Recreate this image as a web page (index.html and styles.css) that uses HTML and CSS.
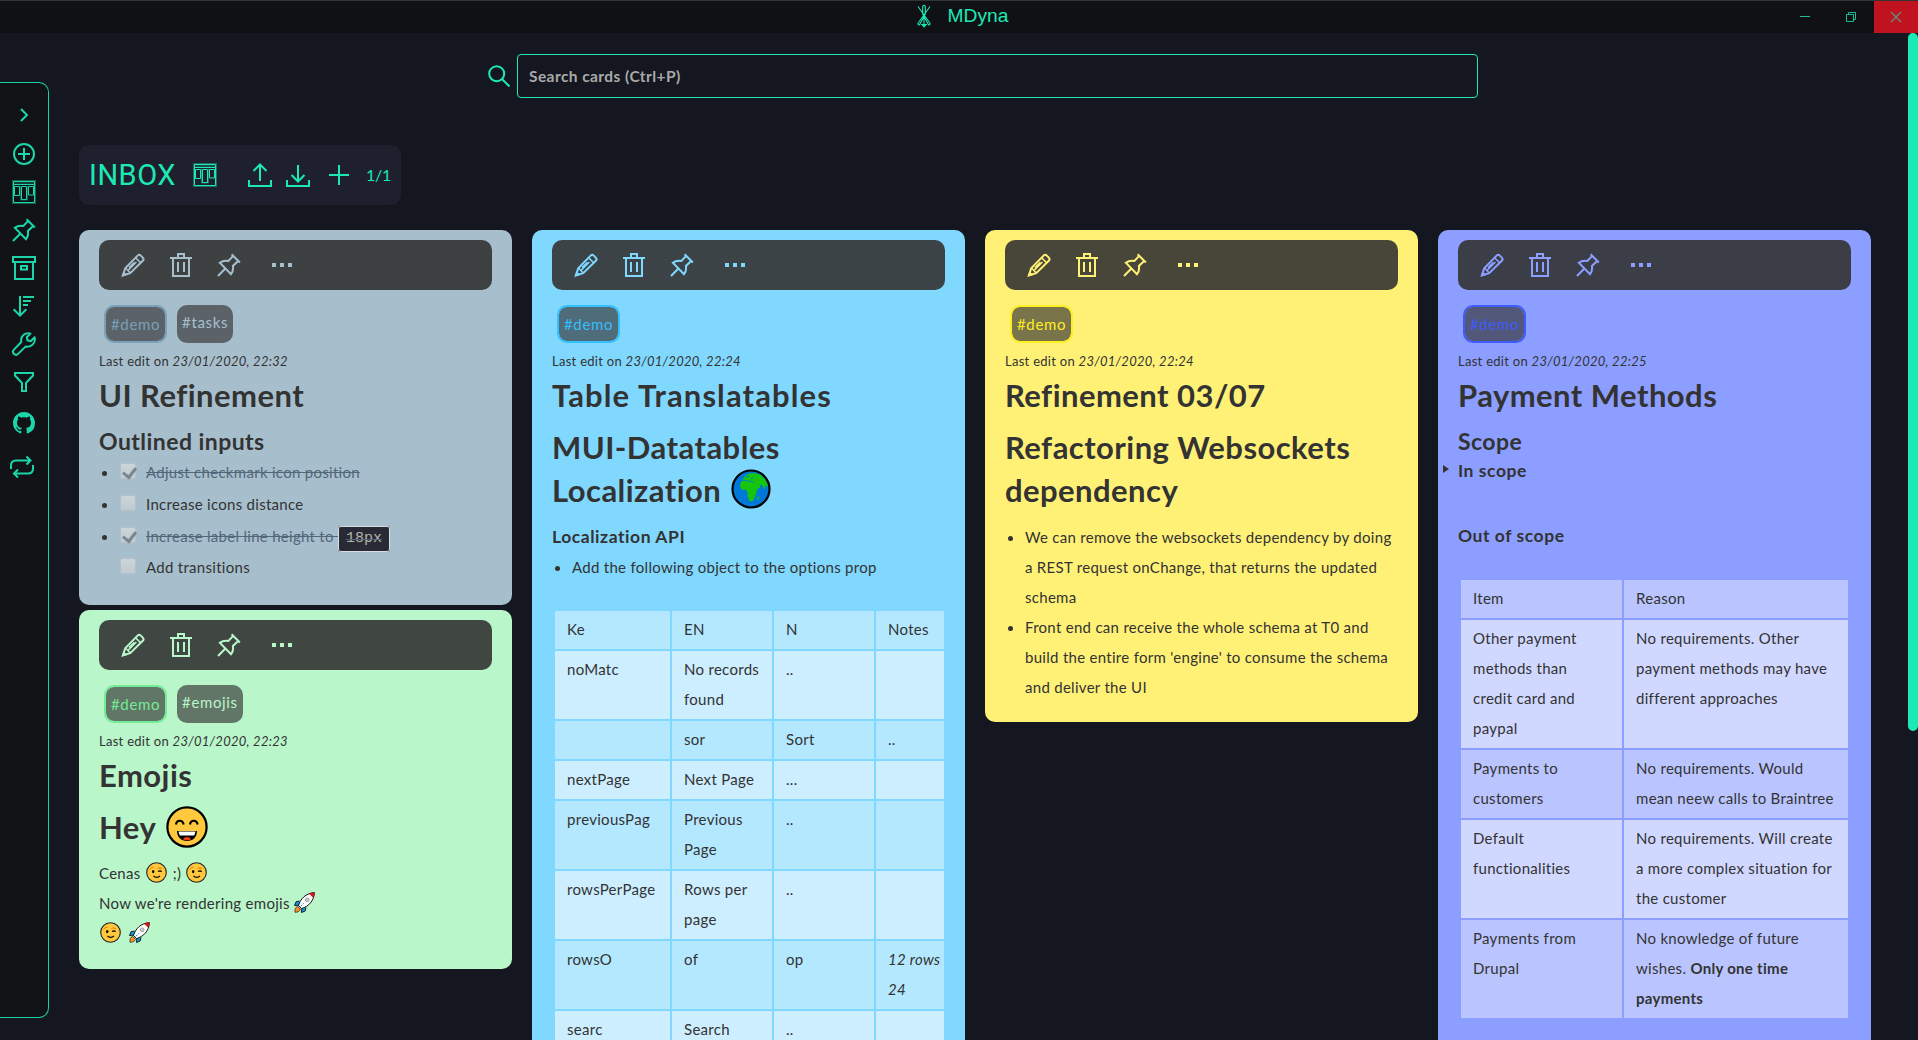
FILE: index.html
```
<!DOCTYPE html>
<html lang="en">
<head>
<meta charset="utf-8">
<title>MDyna</title>
<link rel="stylesheet" href="styles.css">
</head>
<body>
<svg class="sprite" aria-hidden="true">
  <symbol id="edit" viewBox="0 0 24 24"><path d="M2 22.3 4.2 15.2 16.6 2.6c1-1 2.3-.9 3.2 0l2 2c.9.9.9 2.2 0 3.1L9.2 20.2Z"/><path stroke-width="1.500" d="m14.6 4.7 4.9 4.9M4.5 15l4.7 5M6.8 17.6l8.6-8.6M8 14.6l5.4-5.4"/><path d="M2 22.3l2.6-.8-1.8-1.6Z" fill="currentColor"/></symbol>
  <symbol id="trash" viewBox="0 0 24 24"><path d="M4 5h16v18H4ZM1 5h22M9 5V1h6v4M9 9v10M15 9v10"/></symbol>
  <symbol id="pin" viewBox="0 0 24 24"><path d="m14.6 1.2 8.3 8.3M16.2 2.9 11.4 8C8.600 7.400 5.200 8 2.800 9.700L14 21.200c1.900-2.400 2.400-5.600 1.900-8.300l5.300-4.800M8.400 15.500 1 23"/></symbol>
  <symbol id="more" viewBox="0 0 24 24"><path d="M2 10h4v4H2ZM10 10h4v4h-4ZM18 10h4v4h-4Z" fill="currentColor" stroke="none"/></symbol>
  <symbol id="board" viewBox="0 0 24 24"><g stroke-width="1"><path d="M1.500 1.500h21v21h-21ZM1 4.500h22M2.500 6.500h5v9h-5ZM9.500 6.500h5v13h-5ZM16.500 6.500h5v8.500h-5Z"/><path opacity=".4" d="M.5.5h23v23H.5ZM2 3h20M8.500 6v14h7V6"/></g></symbol>
  <symbol id="next" viewBox="0 0 24 24"><path d="m9 6 6 6-6 6"/></symbol>
  <symbol id="add-circle" viewBox="0 0 24 24"><circle cx="12" cy="12" r="10"/><path d="M12 6v12M6 12h12"/></symbol>
  <symbol id="archive" viewBox="0 0 24 24"><path d="M1 1h22v5H1ZM3 6v17h18V6M9 10h6v3.500H9Z"/></symbol>
  <symbol id="sort" viewBox="0 0 24 24"><path d="M8 2v19.500M1.700 15.200 8 21.600l6.300-6.400M11 3h11M11 7h8M11 11h5"/></symbol>
  <symbol id="wrench" viewBox="0 0 24 24"><path stroke-linejoin="round" d="M18.500 1.600C13 .2 8.200 4 9.300 10L1.900 17.600c-1.200 1.300-1.100 3 0 4.200 1.200 1.200 3 1.300 4.200.1L13.500 14.600C19.500 15.800 24 10.600 22.600 5.300L18.700 9.200 15.400 8.300 14.800 5.300Z"/></symbol>
  <symbol id="filter" viewBox="0 0 24 24"><path d="M3 3h18v2.500l-7 7.500v8h-4v-8L3 5.500Z"/></symbol>
  <symbol id="github" viewBox="0 0 16 16"><path stroke="none" fill="currentColor" d="M8 0C3.580 0 0 3.580 0 8c0 3.540 2.290 6.530 5.470 7.590.4.070.550-.170.550-.380 0-.190-.010-.820-.010-1.490-2.010.370-2.530-.490-2.690-.940-.090-.230-.480-.940-.820-1.130-.280-.150-.680-.520-.010-.530.630-.010 1.080.580 1.230.820.720 1.210 1.870.870 2.330.660.070-.520.280-.870.510-1.070-1.780-.200-3.640-.890-3.640-3.950 0-.870.310-1.590.820-2.150-.080-.200-.360-1.020.080-2.120 0 0 .670-.210 2.200.820.640-.180 1.320-.270 2-.270s1.360.090 2 .270c1.530-1.040 2.200-.820 2.200-.820.440 1.100.160 1.920.080 2.120.510.560.820 1.270.820 2.150 0 3.070-1.870 3.750-3.650 3.950.290.250.540.730.540 1.480 0 1.070-.010 1.930-.010 2.200 0 .210.150.460.550.380A8.010 8.010 0 0 0 16 8c0-4.420-3.580-8-8-8Z"/></symbol>
  <symbol id="repeat" viewBox="0 0 24 24"><path d="M1 14v-3.500C1 7.500 3 5.500 6 5.500h14M16.500 1.500l4 4-4 4M23 10v3.500c0 3-2 5-5 5H5M8 14.500l-4 4 4 4"/></symbol>
  <symbol id="upload" viewBox="0 0 24 24"><path d="M1 17v6h22v-6M12 18V2M5.500 8 12 1.500 18.500 8"/></symbol>
  <symbol id="download" viewBox="0 0 24 24"><path d="M1 17v6h22v-6M12 2v16M5.500 12 12 18.500l6.500-6.500"/></symbol>
  <symbol id="plus" viewBox="0 0 24 24"><path d="M12 2v20M2 12h20"/></symbol>
  <symbol id="grin" viewBox="0 0 42 42"><circle cx="21" cy="21" r="19.600" fill="#ffc83d" stroke="#000" stroke-width="2.200"/><path d="M10 18.500c.6-5 6.800-5 7.600 0M24 18.500c.6-5 6.800-5 7.600 0" stroke="#000" stroke-width="2.200"/><path d="M11 25h20c0 6-4 10-10 10s-10-4-10-10Z" fill="#000" stroke="none"/><path d="M12.300 25.500h17.400l-1.500 4H13.800Z" fill="#fff" stroke="none"/><path d="M17 33.200c1.500-3 6.500-3 8 0-2 1.300-6 1.300-8 0Z" fill="#f03a17" stroke="none"/></symbol>
  <symbol id="wink" viewBox="0 0 21 21"><circle cx="10.500" cy="10.500" r="9.800" fill="#ffc83d" stroke="#222" stroke-width="1.100"/><ellipse cx="7.200" cy="9.600" rx="1.200" ry="1.600" fill="#000" stroke="none"/><path d="M12.200 9.800c.7-1.300 2.600-1.300 3.400 0M7.500 13.800c1.600 2 4.800 2 6.400 0" stroke="#000" stroke-width="1.200"/><path d="M3.800 7.500c.7-1.600 1.900-2.300 3.600-2.300M11.500 6.500c1.300-.7 3.500-.6 4.700.5" stroke="#d67d00" stroke-width="1"/></symbol>
  <symbol id="rocket" viewBox="0 0 21 21"><path d="M5.500 9 2 9.800.5 13.500 5 13.200M12 15.500l-.8 3.500-3.700 1.500.3-4.500" fill="#0a9be8" stroke="#111" stroke-width=".9"/><path d="M1 20.300c-.5-2.500.5-5.300 2.500-6l3 3c-.7 2-3.300 3.200-5.500 3Z" fill="#ff8a1f" stroke="#222" stroke-width=".7"/><path d="M4.500 13.500C6.500 6.500 12 1.200 20.300.7 20 9 14.500 14.500 7.500 16.600Z" fill="#fff" stroke="#111" stroke-width="1"/><path d="M15.500 1.700c1.500-.6 3-.9 4.800-1-.1 1.700-.4 3.200-1 4.800Z" fill="#e81224" stroke="#a00" stroke-width=".6"/><circle cx="13.200" cy="7.800" r="1.900" fill="#ccc" stroke="#888" stroke-width=".7"/><path d="m6.800 14.300 3-3" stroke="#0a9be8" stroke-width="1" stroke-dasharray="2 1"/></symbol>
  <symbol id="globe" viewBox="0 0 40 40"><circle cx="20" cy="20" r="18.500" fill="#0078d7" stroke="#000" stroke-width="2.200"/><path d="M11.500 11 14 7l4-2.500 5-.5 6 1.500 5 4.500 2.800 6-.7 2-2.100-1.500-.5 4-2.500-4.500-2.500-.5 1 3-3 1.500-1.500 5-2 5-2 2.500-2.500-.5-2-5 .2-4-1.700-2-4.500-.5-1.500-3 .5-3.500 2.500-2.800Z" fill="#16c60c" stroke="none"/><path d="M12 11.500c2-1 3 1 5 .3s3 1.700 5.500 1M15 8l3-.5M20 9.500l2.500-1" stroke="#0078d7" stroke-width="1"/><path d="m27.200 27.500.9 1.800-1.500 1.200Z" fill="#16c60c" stroke="#16c60c" stroke-width=".8"/></symbol>
</svg>

<header class="titlebar">
  <div class="brand">
    <svg class="logo" viewBox="0 0 16 24"><path d="M2 2.500 13.800 19M14 2.500 2.200 19M8 10v12.500M6.700 2v8L8 12.500 9.300 10V2Q8 .6 6.700 2M2.200 19q-.8 2 1.200 2L8 12.500M13.800 19q.8 2-1.200 2L8 12.500M5.800 20.500 8 23l2.200-2.500Z"/></svg>
    <span>MDyna</span>
  </div>
  <div class="controls">
    <span class="control"><svg viewBox="0 0 12 12"><path d="M1 5.500h10"/></svg></span>
    <span class="control"><svg viewBox="0 0 12 12"><path d="M1.500 3.500h7v7h-7ZM3.500 3.500v-2h7v7h-2"/></svg></span>
    <span class="control close"><svg viewBox="0 0 12 12"><path d="m1 1 10 10M11 1 1 11"/></svg></span>
  </div>
</header>

<div class="app">
  <nav class="sidebar">
    <svg class="icon next"><use href="#next"/></svg>
    <svg class="icon"><use href="#add-circle"/></svg>
    <svg class="icon"><use href="#board"/></svg>
    <svg class="icon"><use href="#pin"/></svg>
    <svg class="icon"><use href="#archive"/></svg>
    <svg class="icon"><use href="#sort"/></svg>
    <svg class="icon"><use href="#wrench"/></svg>
    <svg class="icon"><use href="#filter"/></svg>
    <svg class="icon github"><use href="#github"/></svg>
    <svg class="icon repeat"><use href="#repeat"/></svg>
  </nav>

  <main class="main">
    <div class="search">
      <svg class="search-icon" viewBox="0 0 24 24"><circle cx="9.500" cy="9.500" r="8.200"/><path d="m15.500 15.500 8 8"/></svg>
      <div class="search-input">Search cards (Ctrl+P)</div>
    </div>

    <div class="board-head">
      <span class="board-name">INBOX</span>
      <svg class="icon"><use href="#board"/></svg>
      <svg class="icon upload"><use href="#upload"/></svg>
      <svg class="icon download"><use href="#download"/></svg>
      <svg class="icon plus"><use href="#plus"/></svg>
      <span class="count">1/1</span>
    </div>

    <div class="columns">
      <div class="column">
        <article class="card slate">
          <div class="toolbar"><svg class="icon"><use href="#edit"/></svg><svg class="icon"><use href="#trash"/></svg><svg class="icon"><use href="#pin"/></svg><svg class="icon more"><use href="#more"/></svg></div>
          <div class="tags"><span class="tag active">#demo</span><span class="tag">#tasks</span></div>
          <p class="meta">Last edit on <em>23/01/2020, 22:32</em></p>
          <h1 class="title">UI Refinement</h1>
          <h2>Outlined inputs</h2>
          <ul class="tasks">
            <li><span class="box checked"></span><s>Adjust checkmark icon position</s></li>
            <li><span class="box"></span><span>Increase icons distance</span></li>
            <li><span class="box checked"></span><s>Increase label line height to <code>18px</code></s></li>
            <li class="plain"><span class="box"></span><span>Add transitions</span></li>
          </ul>
        </article>

        <article class="card green">
          <div class="toolbar"><svg class="icon"><use href="#edit"/></svg><svg class="icon"><use href="#trash"/></svg><svg class="icon"><use href="#pin"/></svg><svg class="icon more"><use href="#more"/></svg></div>
          <div class="tags"><span class="tag active">#demo</span><span class="tag">#emojis</span></div>
          <p class="meta">Last edit on <em>23/01/2020, 22:23</em></p>
          <h1 class="title">Emojis</h1>
          <h1>Hey <svg class="emoji-lg"><use href="#grin"/></svg></h1>
          <p class="text">Cenas <svg class="emoji"><use href="#wink"/></svg> ;) <svg class="emoji"><use href="#wink"/></svg><br>Now we're rendering emojis <svg class="emoji late"><use href="#rocket"/></svg><br><svg class="emoji"><use href="#wink"/></svg> <svg class="emoji last"><use href="#rocket"/></svg></p>
        </article>
      </div>

      <div class="column">
        <article class="card blue">
          <div class="toolbar"><svg class="icon"><use href="#edit"/></svg><svg class="icon"><use href="#trash"/></svg><svg class="icon"><use href="#pin"/></svg><svg class="icon more"><use href="#more"/></svg></div>
          <div class="tags"><span class="tag active">#demo</span></div>
          <p class="meta">Last edit on <em>23/01/2020, 22:24</em></p>
          <h1 class="title wide">Table Translatables</h1>
          <h1>MUI-Datatables Localization <svg class="emoji-lg globe"><use href="#globe"/></svg></h1>
          <h4 class="api">Localization API</h4>
          <ul class="list"><li>Add the following object to the options prop</li></ul>
          <div class="table-wrap">
            <table class="translations">
              <colgroup><col class="c-key"><col class="c-lang"><col class="c-lang"><col class="c-notes"></colgroup>
              <tr><td>Ke</td><td>EN</td><td>N</td><td>Notes</td></tr>
              <tr><td>noMatc</td><td>No records found</td><td>..</td><td></td></tr>
              <tr><td></td><td>sor</td><td>Sort</td><td>..</td></tr>
              <tr><td>nextPage</td><td>Next Page</td><td>...</td><td></td></tr>
              <tr><td>previousPag</td><td>Previous Page</td><td>..</td><td></td></tr>
              <tr><td>rowsPerPage</td><td>Rows per page</td><td>..</td><td></td></tr>
              <tr><td>rowsO</td><td>of</td><td>op</td><td><em>12 rows 24</em></td></tr>
              <tr><td>searc</td><td>Search</td><td>..</td><td></td></tr>
            </table>
          </div>
        </article>
      </div>

      <div class="column">
        <article class="card yellow">
          <div class="toolbar"><svg class="icon"><use href="#edit"/></svg><svg class="icon"><use href="#trash"/></svg><svg class="icon"><use href="#pin"/></svg><svg class="icon more"><use href="#more"/></svg></div>
          <div class="tags"><span class="tag active">#demo</span></div>
          <p class="meta">Last edit on <em>23/01/2020, 22:24</em></p>
          <h1 class="title">Refinement 03/07</h1>
          <h1>Refactoring Websockets dependency</h1>
          <ul class="list spaced">
            <li>We can remove the websockets dependency by doing a REST request onChange, that returns the updated schema</li>
            <li>Front end can receive the whole schema at T0 and build the entire form 'engine' to consume the schema and deliver the UI</li>
          </ul>
        </article>
      </div>

      <div class="column">
        <article class="card indigo">
          <div class="toolbar"><svg class="icon"><use href="#edit"/></svg><svg class="icon"><use href="#trash"/></svg><svg class="icon"><use href="#pin"/></svg><svg class="icon more"><use href="#more"/></svg></div>
          <div class="tags"><span class="tag active">#demo</span></div>
          <p class="meta">Last edit on <em>23/01/2020, 22:25</em></p>
          <h1 class="title">Payment Methods</h1>
          <h2>Scope</h2>
          <h4 class="summary">In scope</h4>
          <h4 class="out">Out of scope</h4>
          <div class="table-wrap">
            <table class="payments">
              <colgroup><col class="c-item"><col class="c-reason"></colgroup>
              <tr><td>Item</td><td>Reason</td></tr>
              <tr><td>Other payment methods than credit card and paypal</td><td>No requirements. Other payment methods may have different approaches</td></tr>
              <tr><td>Payments to customers</td><td>No requirements. Would mean neew calls to Braintree</td></tr>
              <tr><td>Default functionalities</td><td>No requirements. Will create a more complex situation for the customer</td></tr>
              <tr><td>Payments from Drupal</td><td>No knowledge of future wishes. <b>Only one time payments</b></td></tr>
            </table>
          </div>
        </article>
      </div>
    </div>
  </main>
  <div class="scrollbar"></div>
</div>
</body>
</html>
```
FILE: styles.css
```
* { box-sizing: border-box; }

body {
  margin: 0;
  height: 100vh;
  display: flex;
  flex-direction: column;
  overflow: hidden;
  background: #14171f;
  color: #333;
  font: 15px/30px Lato, sans-serif;
  letter-spacing: .29px;
}

h1, h2, h4, p, ul { margin: 0; padding: 0; }

svg { fill: none; stroke: currentColor; stroke-width: 2; flex: none; }
.sprite { display: none; }
.icon { display: block; width: 24px; height: 24px; }

/* Title bar */
.titlebar {
  height: 33px;
  flex: none;
  display: grid;
  grid-template-columns: 1fr auto 1fr;
  background: #0f1115;
  border-top: 1px solid #333436;
  color: #1de9b6;
}
.brand {
  grid-column: 2;
  display: flex;
  align-items: center;
  gap: 16px;
  padding: 0 0 2px 6px;
  font: 19.2px/30px "Liberation Sans", sans-serif;
  letter-spacing: 0;
}
.logo { width: 16px; height: 24px; stroke-width: 1.1; }
.controls { display: flex; justify-content: flex-end; }
.control {
  width: 46px;
  display: flex;
  align-items: center;
  justify-content: center;
}
.control svg { width: 12px; height: 12px; stroke-width: 1; opacity: .8; }
.close { width: 44px; background: #c1121f; }
.close svg { opacity: .6; stroke-width: 1.3; }

.app { flex: 1; min-height: 0; display: flex; }

/* Sidebar */
.sidebar {
  width: 49px;
  height: 936px;
  margin-top: 49px;
  flex: none;
  display: flex;
  flex-direction: column;
  gap: 14px;
  padding: 20px 0 0 12px;
  border: 1px solid #1ad0a4;
  border-left: 0;
  border-radius: 0 10px 10px 0;
  background: #121317;
  color: #1bd6a8;
}
.sidebar .next { margin-bottom: 1px; }
.sidebar .github { margin: 4px 0 0 1px; width: 22px; height: 22px; }
.sidebar .repeat { margin: 7px 0 0 -2px; }

.main { flex: 1; min-width: 0; overflow: hidden; padding-left: 30px; }

/* Search */
.search {
  display: flex;
  align-items: center;
  gap: 7px;
  margin: 21px 0 0 409px;
  color: #1de9b6;
}
.search-icon { width: 22px; height: 22px; stroke-width: 2.2; }
.search-input {
  width: 961px;
  height: 44px;
  padding: 6px 11px;
  border: 1px solid #1de9b6;
  border-radius: 4px;
  color: #a9a9aa;
  font-size: 15.500px;
  font-weight: 700;
  letter-spacing: .43px;
}

/* Board header */
.board-head {
  width: 322px;
  height: 60px;
  margin-top: 47px;
  padding-left: 10px;
  display: flex;
  align-items: center;
  border-radius: 10px;
  background: #1f202d;
  color: #1de9b6;
}
.board-name {
  width: 104px;
  font: 29px/36px Roboto, sans-serif;
  letter-spacing: .5px;
}
.upload { margin-left: 31px; }
.download { margin-left: 14px; }
.plus { margin-left: 17px; }
.count { margin-left: 15px; font-size: 16px; letter-spacing: -.3px; }

/* Cards */
.columns {
  display: flex;
  align-items: flex-start;
  gap: 20px;
  margin-top: 25px;
}
.column { width: 433px; display: flex; flex-direction: column; gap: 5px; }
.card { padding: 10px 20px 20px; border-radius: 10px; background: var(--c); }
.slate { --c: #a7bfcd; --deep: #78a0b8; --odd: #cad9e1; --even: #dce5eb; height: 375px; }
.green { --c: #b9f6ca; --deep: #73ec96; --odd: #d5fadf; --even: #e3fbea; height: 359px; }
.blue { --c: #80d8ff; --deep: #34bfff; --odd: #b3e8ff; --even: #cceeff; height: 900px; }
.yellow { --c: #fff176; --deep: #ffee22; --odd: #fff7ad; --even: #fff9c8; height: 492px; }
.indigo { --c: #8c9eff; --deep: #3f5bff; --odd: #bac5ff; --even: #d1d8ff; height: 860px; }

.toolbar {
  height: 50px;
  display: flex;
  align-items: center;
  gap: 24px;
  padding-left: 22px;
  border-radius: 10px;
  background: rgba(51, 51, 51, .9);
  color: var(--c);
}
.toolbar .more { margin-left: 5px; }

.tags { display: flex; gap: 10px; margin: 15px 0 0 5px; }
.tag {
  height: 38px;
  padding: 2px 5px;
  border-radius: 10px;
  background: rgba(51, 51, 51, .66);
  color: var(--c);
  letter-spacing: .64px;
}
.tag.active { border: 2px solid var(--deep); color: var(--deep); background-clip: padding-box; }

.meta { margin-top: 8px; font-size: 13px; line-height: 20px; letter-spacing: .28px; }

h1, h2, h4 { font-weight: 700; }
h1 {
  margin-top: 9.500px;
  font-size: 31px;
  line-height: 43.200px;
  letter-spacing: .45px;
}
.title { margin-top: 2.500px; }
.wide { letter-spacing: 1.100px; }
h2 {
  margin-top: 8px;
  font-size: 23px;
  line-height: 32.500px;
  letter-spacing: .45px;
}
h4 { font-size: 17.500px; line-height: 27px; letter-spacing: .55px; }
.api { margin: 10px 0 2px; }
.out { margin-top: 38px; }
.summary { position: relative; }
.summary::before {
  content: "";
  position: absolute;
  left: -15px;
  top: 8px;
  border: solid transparent;
  border-width: 4px 0 4px 6px;
  border-left-color: #333;
}

.list, .tasks { list-style: none; }
.list li { position: relative; padding-left: 20px; }
.list.spaced { margin-top: 9px; }
.list li::before,
.tasks li::before {
  content: "";
  position: absolute;
  left: 3px;
  top: 14px;
  width: 5px;
  height: 5px;
  border-radius: 50%;
  background: #333;
}

.tasks li {
  position: relative;
  display: flex;
  gap: 10px;
  height: 31.700px;
  padding-left: 21px;
  line-height: 31px;
  white-space: pre;
}
.tasks .plain::before { display: none; }
.tasks s { color: #53677a; }
.box {
  width: 16px;
  height: 16px;
  margin-top: 6px;
  flex: none;
  border: 1px solid #b4c1c8;
  border-radius: 2px;
  background: linear-gradient(#cbd5dc, #bfcbd1);
}
.box.checked::after {
  content: "";
  display: block;
  width: 6px;
  height: 10px;
  margin: 1px 0 0 4px;
  border: solid #7b868d;
  border-width: 0 3px 3px 0;
  transform: rotate(38deg);
}
code {
  padding: 3px 7px 4px;
  border: 1px solid #d8dde0;
  border-radius: 3px;
  background: #282a36;
  color: #b5b3a3;
  font: 15px/1 "Liberation Mono", monospace;
  letter-spacing: 0;
}

.text { margin-top: 9px; }
.emoji { width: 21px; height: 21px; margin: -4px 2px -4px 1px; vertical-align: 0; }
.emoji.late { margin-left: 0; }
.emoji.last { margin-left: 2px; }
.emoji-lg { width: 42px; height: 42px; margin: -8px 0 -8px 3px; vertical-align: -.400px; }
.emoji-lg.globe { width: 40px; height: 40px; margin-left: 2px; vertical-align: 1.200px; }

/* Tables */
.table-wrap { width: 392px; overflow: hidden; margin-top: 27.500px; padding-left: 1px; }
.out + .table-wrap { margin-top: 28.500px; }
table { table-layout: fixed; border-collapse: separate; border-spacing: 2px; }
.translations { width: 409px; }
.payments { width: 391px; }
td { padding: 3px 12px 5px; vertical-align: top; background: var(--even); height: 38px; }
tr:nth-child(odd) td { background: var(--odd); }
.c-key { width: 115px; }
.c-lang { width: 100px; }
.c-notes { width: 84px; }
.c-item { width: 161px; }
.c-reason { width: 224px; }

.scrollbar { width: 10px; height: 698px; flex: none; border-radius: 5px; background: #1de9b6; }
```
